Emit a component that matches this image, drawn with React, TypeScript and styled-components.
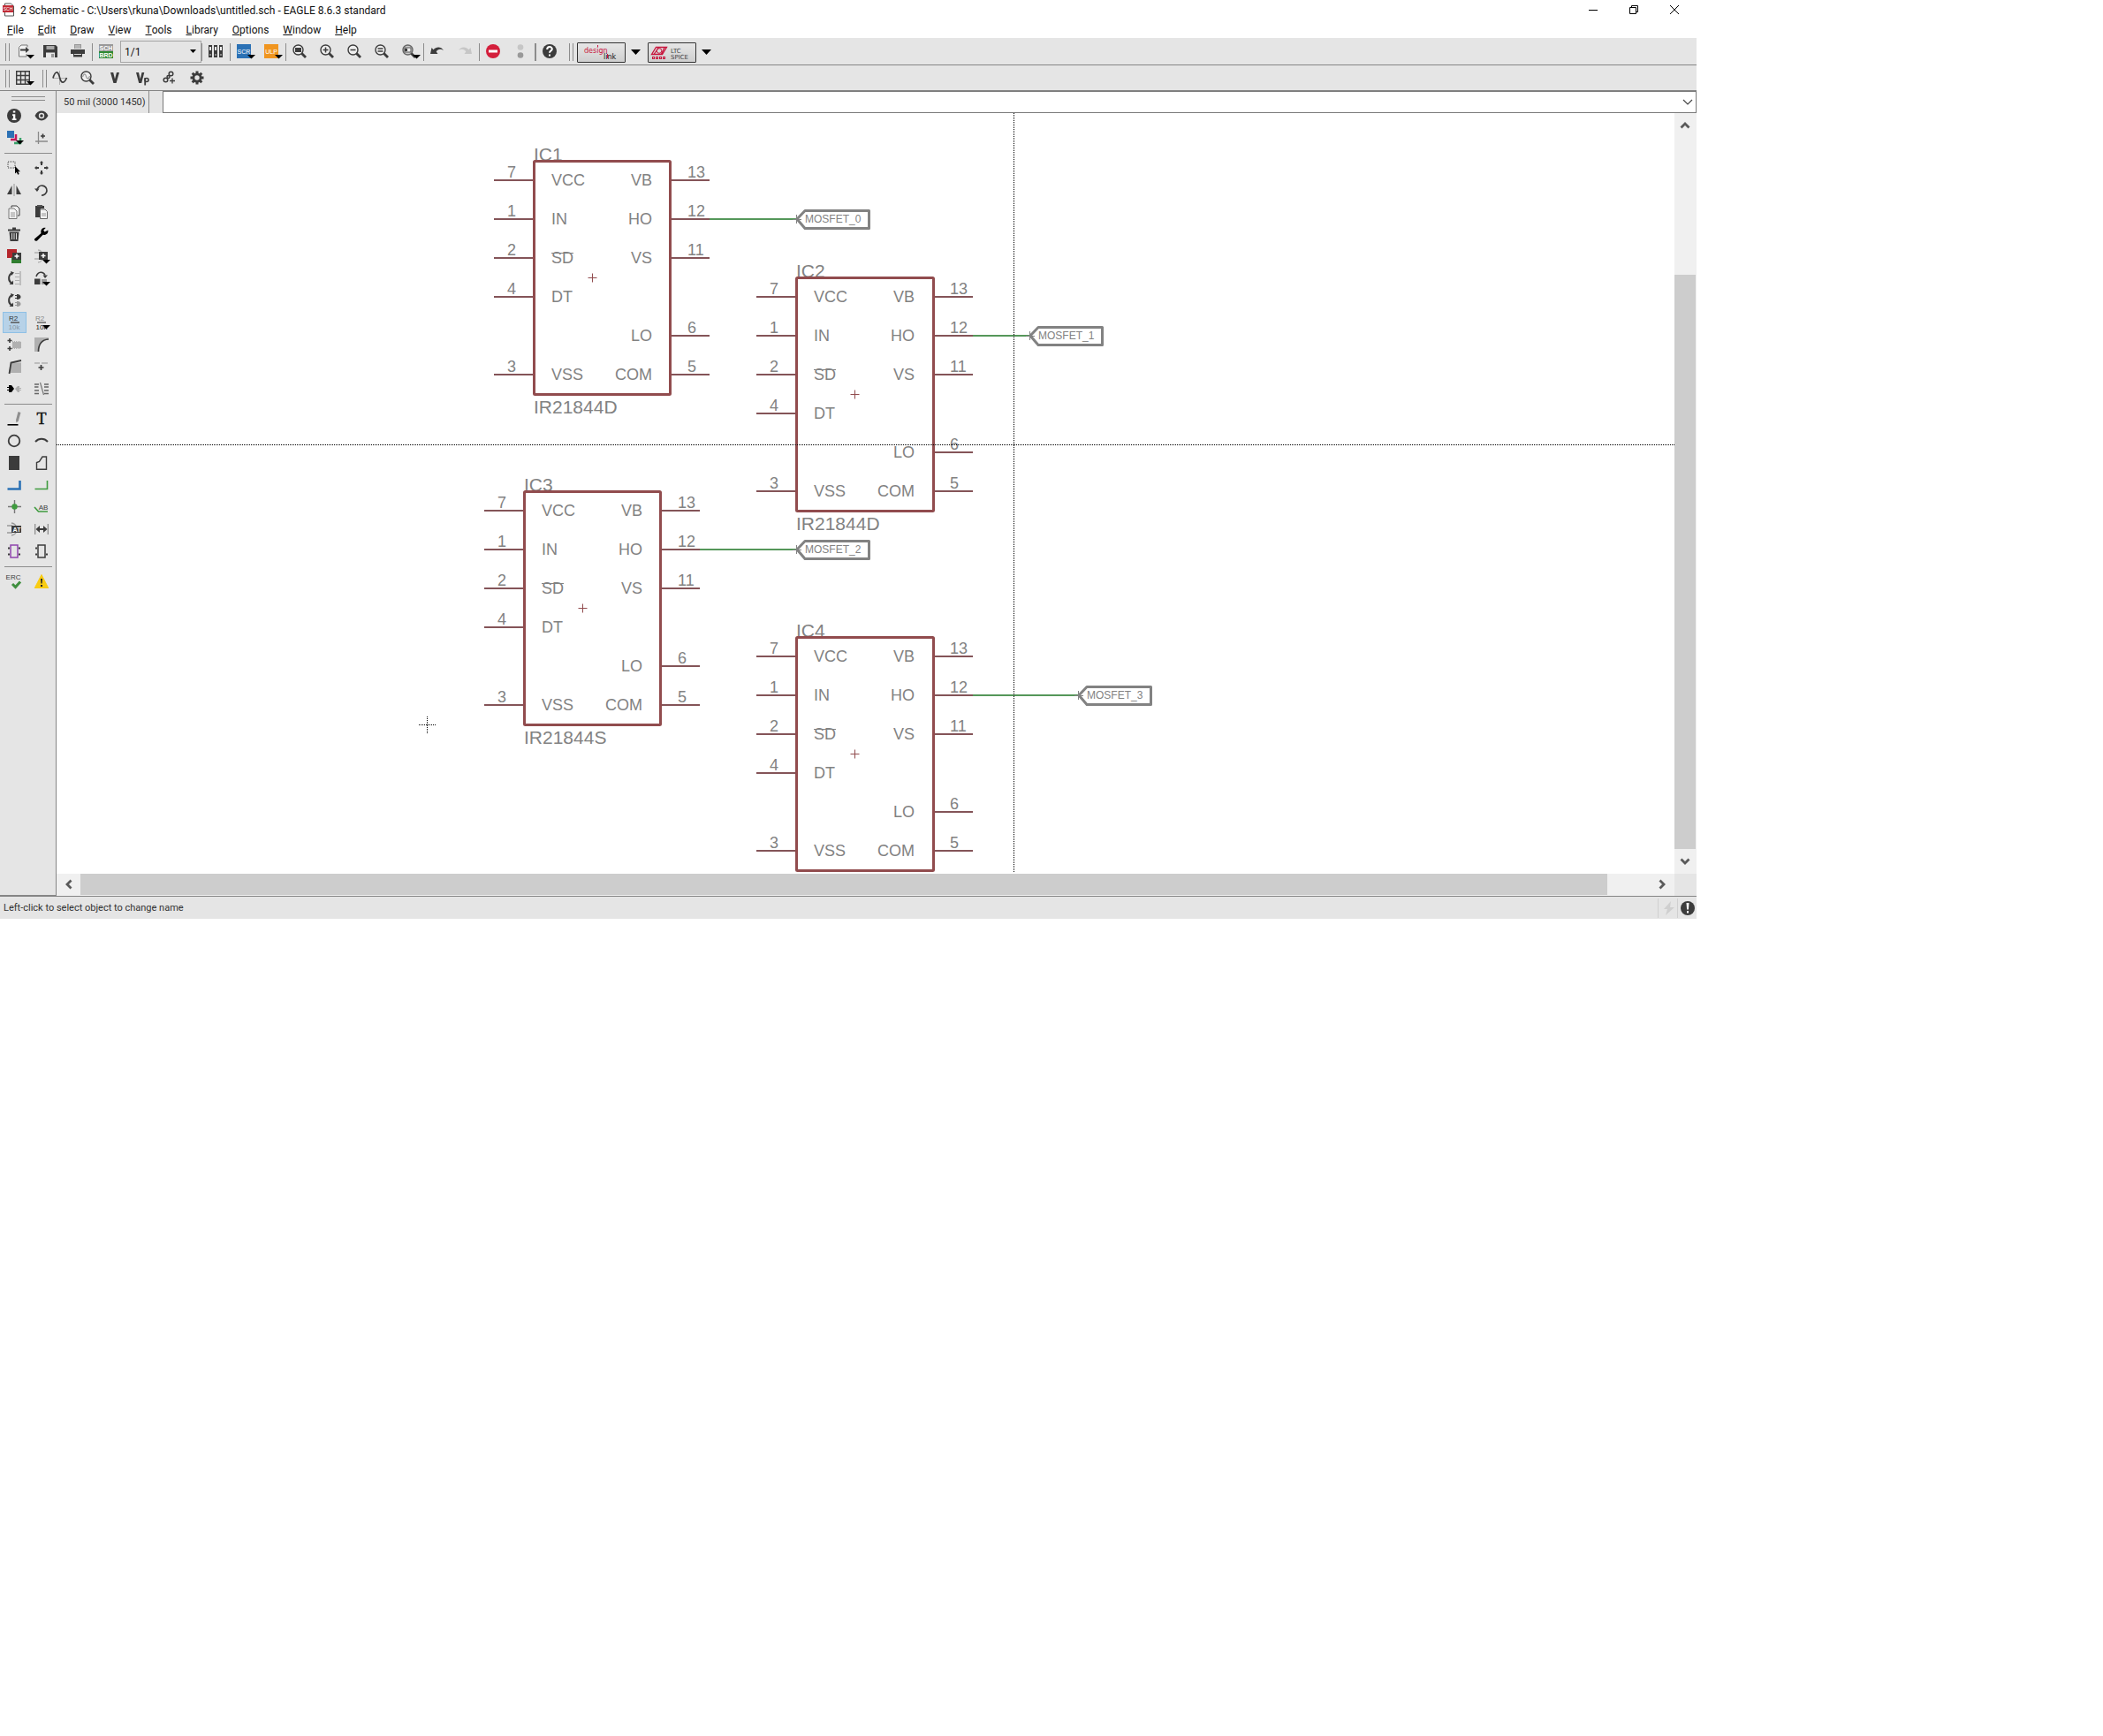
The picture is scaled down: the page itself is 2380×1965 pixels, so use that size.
import React from "react";
import styled, { createGlobalStyle, css } from "styled-components";

const ui = `Roboto, "Open Sans", sans-serif`;
const dark = "#3c3c3c";
const mid = "#8a8a8a";
const light = "#b0b0b0";
const green = "#3f9b3f";

const Global = createGlobalStyle`
  * { box-sizing: border-box; }
  body { margin: 0; background: #fff; }
  button, input, select { font: inherit; color: inherit; }
`;

const AppWindow = styled.main`
  max-width: 1920px;
  display: flex;
  flex-direction: column;
  background: #fff;
  color: #111;
  font-family: ${ui};
  font-size: 12px;
`;

const TitleBar = styled.header`
  display: flex;
  align-items: center;
  height: 22px;
  padding-left: 3px;
  gap: 7px;
`;

const Title = styled.h1`
  flex: 1;
  margin: 0;
  padding-top: 2px;
  font-size: 12px;
  line-height: 20px;
  font-weight: 400;
  white-space: nowrap;
`;

const WindowButtons = styled.div`
  display: flex;
  margin-right: 2px;
`;

const plainButton = css`
  border: 0;
  margin: 0;
  padding: 0;
  background: none;
  display: flex;
  align-items: center;
  justify-content: center;
  flex: none;
`;

const WindowButton = styled.button`
  ${plainButton}
  width: 46px;
  height: 20px;
`;

const MenuBar = styled.nav`
  display: flex;
  align-items: center;
  gap: 16px;
  height: 21px;
  padding: 3px 0 0 8px;
`;

const MenuButton = styled.button`
  ${plainButton}
  font-size: 12px;
  line-height: 20px;
`;

const Toolbar = styled.div<{ $main?: boolean }>`
  display: flex;
  align-items: flex-start;
  height: ${(p) => (p.$main ? 31 : 29)}px;
  padding: ${(p) => (p.$main ? 3 : 2)}px 0 0 6px;
  background: #e5e5e5;
  border-bottom: 1px solid #858585;
`;

const Handle = styled.span`
  flex: none;
  width: 5px;
  height: 20px;
  margin-top: 3px;
  border: solid #8c8c8c;
  border-width: 0 1px;
`;

const Gap = styled.span<{ $w: number }>`
  flex: none;
  width: ${(p) => p.$w}px;
`;

const Divider = styled.span<{ $wide?: boolean }>`
  flex: none;
  width: ${(p) => (p.$wide ? 2 : 1)}px;
  height: 20px;
  margin-top: 3px;
  background: #8c8c8c;
`;

const ToolButton = styled.button<{ $active?: boolean }>`
  ${plainButton}
  align-items: flex-start;
  justify-content: flex-start;
  width: 31px;
  height: 25px;
  padding: 4px 0 0 7px;
  svg { flex: none; overflow: visible; }
  ${(p) =>
    p.$active &&
    css`
      width: 27px;
      height: 24px;
      margin: 0 2px;
      padding: 3px 0 0 4px;
      background: #b7d2e8;
      border: 1px solid #8fc0e6;
    `}
`;

const SheetPicker = styled.label`
  position: relative;
  flex: none;
  width: 92px;
  height: 25px;
`;

const SheetSelect = styled.select`
  appearance: none;
  width: 100%;
  height: 100%;
  padding: 0 4px;
  border: 1px solid #a6a6a6;
  border-radius: 0;
  background: #e5e5e5;
  font-size: 12px;
`;

const PickerArrow = styled.svg`
  position: absolute;
  right: 6px;
  top: 10px;
  pointer-events: none;
`;

const LogoButton = styled.button`
  ${plainButton}
  width: 55px;
  height: 23px;
  margin-top: 2px;
  border: 1px solid #333;
  border-radius: 1px;
  background: linear-gradient(#e6e6e6, #cfcfcf);
`;

const ArrowButton = styled.button`
  ${plainButton}
  width: 25px;
  height: 25px;
  padding-right: 2px;
`;

const Body = styled.div`
  display: flex;
`;

const ToolPalette = styled.aside`
  flex: none;
  width: 64px;
  background: #e5e5e5;
  border: solid #858585;
  border-width: 0 1px 1px 0;
`;

const PaletteHandle = styled.div`
  height: 5px;
  margin: 6px 12px 5px 13px;
  border: solid #8c8c8c;
  border-width: 1px 0;
`;

const PaletteGroup = styled.div`
  display: grid;
  grid-template-columns: 31px 31px;
  grid-auto-rows: 25px;
  align-items: start;
  padding-left: 1px;
`;

const PaletteRule = styled.hr`
  height: 1px;
  margin: 4px 4px 4px 5px;
  border: 0;
  background: #8c8c8c;
`;

const Workspace = styled.div`
  flex: 1;
  min-width: 0;
`;

const CommandRow = styled.div`
  display: flex;
  height: 25px;
  background: #e5e5e5;
`;

const Coordinates = styled.output`
  width: 105px;
  padding-left: 8px;
  border-right: 1px solid #8c8c8c;
  font-size: 11px;
  line-height: 26px;
  color: #333;
  white-space: nowrap;
`;

const CommandBox = styled.div`
  flex: 1;
  display: flex;
  margin-left: 15px;
  border: 1px solid #7a7a7a;
  background: #fff;
`;

const CommandInput = styled.input`
  flex: 1;
  min-width: 0;
  border: 0;
  padding: 0 4px;
  outline: 0;
  background: none;
`;

const CommandArrow = styled.button`
  ${plainButton}
  width: 18px;
`;

const CanvasGrid = styled.div`
  display: grid;
  grid-template-columns: 1fr 25px;
  grid-template-rows: auto 25px;
  background: #e5e5e5;
`;

const Sheet = styled.svg`
  display: block;
  width: 100%;
  background: #fff;
  overflow: hidden;
  font-family: "Liberation Sans", Arial, sans-serif;
  font-size: 18px;
`;

const ScrollBar = styled.div<{ $vertical?: boolean }>`
  display: flex;
  flex-direction: ${(p) => (p.$vertical ? "column" : "row")};
  background: #f0f0f0;
  padding: 0 1px 1px 0;
`;

const ScrollButton = styled.button`
  ${plainButton}
  flex: 0 0 27px;
`;

const ScrollTrack = styled.div<{ $vertical?: boolean }>`
  flex: 1;
  display: flex;
  flex-direction: ${(p) => (p.$vertical ? "column" : "row")};
  justify-content: ${(p) => (p.$vertical ? "flex-end" : "flex-start")};
`;

const ScrollThumb = styled.div<{ $part: number }>`
  flex: 0 0 ${(p) => p.$part}%;
  background: #cdcdcd;
`;

const StatusBar = styled.footer`
  display: flex;
  align-items: center;
  height: 26px;
  padding-left: 4px;
  border-top: 1px solid #858585;
  background: #e5e5e5;
  color: #333;
  font-size: 11px;
`;

const StatusText = styled.span`
  flex: 1;
`;

const StatusCell = styled.span`
  display: flex;
  align-items: center;
  justify-content: flex-end;
  width: 22px;
  height: 22px;
  padding-right: 2px;
  border-left: 1px solid #d0d0d0;
`;

/* ---------- icons ---------- */

const Drop = ({ x = 12, y = 12 }: { x?: number; y?: number }) => (
  <path d={`M${x} ${y}h9l-4.500 4.500z`} fill="#000" />
);

const Lens = ({ children, grey }: { children?: React.ReactNode; grey?: boolean }) => (
  <>
    <circle cx="6.500" cy="6.500" r="5.500" fill={grey ? "#ccc" : "#efefef"} stroke={grey ? "#666" : dark} strokeWidth="1.400" />
    <path d="M10.500 10.500L15 15" stroke={dark} strokeWidth="2.800" />
    {children}
  </>
);

const Tiny = ({ x, y, fill, size = 7, bold, children }: { x: number; y: number; fill: string; size?: number; bold?: boolean; children: string }) => (
  <text x={x} y={y} fill={fill} fontSize={size} fontWeight={bold ? 700 : 400} fontFamily='"Liberation Sans", Arial, sans-serif' textAnchor="middle">
    {children}
  </text>
);

const icons: Record<string, React.ReactNode> = {
  open: (
    <>
      <path d="M13 3.500V1H6L3.500 3.500V14H12v-3" fill="#f2f2f2" stroke="#777" />
      <path d="M5 6.500h7" stroke={dark} strokeWidth="2" />
      <path d="M11 3l4 3.500-4 3.500z" fill={dark} />
      <Drop />
    </>
  ),
  save: (
    <>
      <path d="M0 1h14l2 2v12H0z" fill={dark} />
      <path d="M3.500 2h9v4h-9z" fill="#a8a8a8" />
      <path d="M3 9.500h10V15H3z" fill="#e8e8e8" />
      <path d="M9 11h3v4H9z" fill="#999" />
    </>
  ),
  print: (
    <>
      <path d="M4 0h8v5H4z" fill="#999" />
      <path d="M5 2h6M5 4h6" stroke="#eee" strokeWidth=".7" />
      <path d="M0 6h16v5H0z" fill={dark} />
      <path d="M3 9h10v5H3z" fill={dark} />
      <path d="M4 11.500h8" stroke="#ddd" />
      <path d="M3 14h10v1H3z" fill="#999" />
    </>
  ),
  board: (
    <>
      <path d="M0 0h16v8H0z" fill="#999" />
      <path d="M0 8h16v8H0z" fill="#2f8a33" />
      <Tiny x={8} y={7} fill="#fff" size={7} bold>SCH</Tiny>
      <Tiny x={8} y={15} fill="#fff" size={7} bold>BRD</Tiny>
    </>
  ),
  sheets: (
    <>
      {[0, 6, 12].map((x) => (
        <g key={x}>
          <path d={`M${x} 1h4v14h-4z`} fill={dark} />
          <path d={`M${x + 1} 3h2v4h-2z`} fill="#eee" />
          <path d={`M${x + 1} 11h2v2h-2z`} fill="#888" />
        </g>
      ))}
    </>
  ),
  scr: (
    <>
      <path d="M0 0h16v16H0z" fill="#2b71b5" />
      <Tiny x={8} y={11} fill="#fff">SCR</Tiny>
      <Drop />
    </>
  ),
  ulp: (
    <>
      <path d="M0 0h16v16H0z" fill="#f0951f" />
      <Tiny x={8} y={11} fill="#fff">ULP</Tiny>
      <Drop />
    </>
  ),
  zoomFit: <Lens><path d="M3 4h7v5H3z" fill={dark} /></Lens>,
  zoomIn: <Lens><path d="M3.500 6.500h6M6.500 3.500v6" stroke={dark} strokeWidth="1.500" /></Lens>,
  zoomOut: <Lens><path d="M3.500 6.500h6" stroke={dark} strokeWidth="1.500" /></Lens>,
  zoomRedraw: <Lens><path d="M3.500 5h6M3.500 8h6" stroke={dark} strokeWidth="1.300" /></Lens>,
  zoomSelect: (
    <>
      <Lens grey><path d="M3 4h7v5H3z" fill="#eee" stroke="#555" /><path d="M3 5h3v3H3z" fill={dark} /></Lens>
      <Drop />
    </>
  ),
  undo: <path d="M0 11l1.500-7 2 2.200C7 2.500 12 2.500 15 7c-3.500-2-6.500-1.500-8.300 1.500L8.500 11z" fill={dark} />,
  redo: <path d="M16 11l-1.500-7-2 2.200C9 2.500 4 2.500 1 7c3.500-2 6.500-1.500 8.300 1.500L7.500 11z" fill="#c6c6c6" />,
  stop: (
    <>
      <circle cx="8" cy="8" r="8" fill="#d41f3c" />
      <path d="M3 6.500h10v3H3z" fill="#fff" />
    </>
  ),
  lights: (
    <>
      <circle cx="8" cy="3.500" r="3.300" fill="#c6c6c6" />
      <circle cx="8" cy="12.500" r="3.300" fill="#999" />
    </>
  ),
  help: (
    <>
      <circle cx="8" cy="8" r="8" fill={dark} />
      <path d="M5.200 6c0-4 5.800-3.600 5.600-.4C10.700 7.500 8 7.300 8 9.800" fill="none" stroke="#fff" strokeWidth="2" />
      <path d="M7 11.500h2v2H7z" fill="#fff" />
    </>
  ),
  grid: (
    <>
      <path d="M.7.700h14.600v14.600H.7zM5.500 0v16M10.500 0v16M0 5.500h16M0 10.500h16" fill="none" stroke={dark} strokeWidth="1.400" />
      <Drop />
    </>
  ),
  wave: (
    <>
      <path d="M0 8.500h16M7.500 0v16" stroke={light} />
      <path d="M0 8.500C2 1 5.500-1 7.500 7.500S13 14 15.500 8" fill="none" stroke={dark} strokeWidth="1.700" />
    </>
  ),
  waveLens: <Lens><path d="M2.500 7C4 3 5.500 3 6.500 6.500S9.500 9.500 10.500 6" fill="none" stroke="#999" strokeWidth="1.200" /></Lens>,
  voltage: <path d="M3 2h3.200L8 9.500 10 2h3L9.600 14H6.400z" fill={dark} />,
  phase: (
    <>
      <path d="M1 2h3l1.700 7.500L7.500 2h2.800L7.200 14h-3z" fill={dark} />
      <path d="M11.200 16.500V8" stroke={dark} strokeWidth="1.800" />
      <circle cx="13" cy="10.500" r="2" fill="none" stroke={dark} strokeWidth="1.600" />
    </>
  ),
  link: (
    <>
      <g fill="none" stroke={dark} strokeWidth="1.500">
        <circle cx="3.500" cy="10.500" r="2.300" />
        <circle cx="9.500" cy="3.500" r="2.300" />
        <circle cx="6.500" cy="7" r="1.500" />
      </g>
      <path d="M8 11.500h6M11 8.500v6" stroke={dark} strokeWidth="1.300" />
    </>
  ),
  gear: (
    <>
      <g stroke={dark} strokeWidth="3">
        <path d="M8 .5v15M.5 8h15M2.700 2.700l10.600 10.600M13.300 2.700L2.700 13.300" />
      </g>
      <circle cx="8" cy="8" r="5.500" fill={dark} />
      <circle cx="8" cy="8" r="2.700" fill="#e5e5e5" />
    </>
  ),
  info: (
    <>
      <circle cx="8" cy="8" r="8" fill={dark} />
      <path d="M6.800 2.500h2.500v2H6.800zM6 6.200h3.300v5H10.500v1.800H5.700v-1.800h1.200V8H6z" fill="#fff" />
    </>
  ),
  eye: (
    <>
      <path d="M.5 8C4 .8 12 .8 15.500 8 12 15.200 4 15.200.5 8z" fill={dark} />
      <circle cx="8" cy="8" r="3.200" fill="#e5e5e5" />
      <circle cx="8" cy="8" r="1.800" fill={dark} />
    </>
  ),
  layers: (
    <>
      <path d="M0 0h8v8H0z" fill="#2b71b5" />
      <path d="M10 4v6H4" fill="none" stroke="#c2185b" strokeWidth="2.500" />
      <path d="M15 8v6H8" fill="none" stroke="#38a169" strokeWidth="2.500" />
      <Drop x={10} y={11} />
    </>
  ),
  mark: (
    <>
      <path d="M4.500 1v14M1 12h14" stroke={mid} strokeWidth="1.300" fill="none" />
      <path d="M7 6h5M9.500 3.500v5" stroke={dark} strokeWidth="1.700" />
    </>
  ),
  group: (
    <>
      <path d="M1 1h8v7H1z" fill="none" stroke={dark} strokeDasharray="1 1" />
      <path d="M9 6v8.500l1.800-1.700 1.400 3 1.500-.7-1.300-2.800H15z" fill="#000" />
    </>
  ),
  move: (
    <path d="M8 0l2.200 2.500H9v2.500H7V2.500H5.800zM8 16l2.200-2.500H9V11H7v2.500H5.800zM0 8l2.500-2.200V7H5v2H2.500v1.200zM16 8l-2.500-2.200V7H11v2h2.500v1.200z" fill={dark} />
  ),
  mirror: (
    <>
      <path d="M5.500 3v10H0z" fill={dark} />
      <path d="M10.500 3v10H16z" fill={dark} />
      <path d="M8 1v14" stroke={light} strokeWidth="1.500" />
    </>
  ),
  rotate: (
    <>
      <path d="M3 8.500a5.500 5.500 0 1 1 5 5.500" fill="none" stroke={dark} strokeWidth="1.700" />
      <path d="M0 6.500h5.500L3 10z" fill={dark} />
    </>
  ),
  copy: (
    <>
      <path d="M5 3V1h6l3 3v8h-2" fill="#eee" stroke={dark} />
      <path d="M2 4h6l3 3v8.500H2z" fill="#f4f4f4" stroke="#777" />
      <path d="M4 9h5M4 11h5M4 13h5" stroke="#999" />
    </>
  ),
  paste: (
    <>
      <path d="M1 1h10v3h-4v10H1z" fill={dark} />
      <path d="M3 0h6v2H3z" fill="#555" />
      <path d="M6.500 5H12l2.500 2.500v8h-8z" fill="#f4f4f4" stroke="#666" />
      <path d="M8 10h5M8 12h5" stroke="#999" />
    </>
  ),
  trash: (
    <>
      <path d="M1 2.500h5V.5h4v2h5V4.500H1zM2.500 5.500h11L12.500 16h-9z" fill={dark} />
      <path d="M5.500 7v7M8 7v7M10.500 7v7" stroke="#ddd" />
    </>
  ),
  wrench: <path d="M0 13.500L7.500 7C6.500 3 9 .3 12.700.9L10.200 3.400l1.400 2 3.700-2C16 7 13 9.600 9.600 8.800L3 15.500C1 16.500-.5 15 0 13.500z" fill="#000" />,
  add: (
    <>
      <path d="M0 0h11v10H0z" fill="#b5262c" />
      <path d="M5 9h11v7H5z" fill="#2f7d2f" />
      <path d="M6 4h10v8H6z" fill={dark} />
      <path d="M8.500 8h5M11 5.500v5" stroke="#fff" strokeWidth="1.500" />
    </>
  ),
  addPart: (
    <>
      <path d="M4 1c7 0 7 14 0 14M0 4h6M0 11h6" stroke={light} fill="none" strokeWidth="1.300" />
      <path d="M5 3h10v9H5z" fill={dark} />
      <path d="M7.500 7.500h5M10 5v5" stroke="#fff" strokeWidth="1.500" />
      <Drop x={9} y={12} />
    </>
  ),
  pinSwap: (
    <>
      <path d="M6 2C1 4 1 11 5 13.500" fill="none" stroke={dark} strokeWidth="2" />
      <path d="M4 0l4 1.500L5 5zM2.500 15h4.500v-4.500z" fill={dark} />
      <path d="M9 2.500h5M9 6.500h5M9 10.500h5M9 14.500h5" stroke={light} strokeWidth="1.200" />
      <path d="M15 0v16" stroke={light} strokeWidth="1.500" />
    </>
  ),
  replace: (
    <>
      <path d="M2 6C4 0 10 0 12 4.500" fill="none" stroke={dark} strokeWidth="1.600" />
      <path d="M9.500 4.500h5.500L12 8z" fill={dark} />
      <path d="M0 8.500h6.500V15H0z" fill={dark} />
      <path d="M8 9h6v6H8z" fill="#999" />
      <Drop x={9} y={12} />
    </>
  ),
  gateSwap: (
    <>
      <path d="M6 2C1 4 1 11 5 13.500" fill="none" stroke={dark} strokeWidth="2" />
      <path d="M4 0l4 1.500L5 5zM2.500 15h4.500v-4.500z" fill={dark} />
      <path d="M11 1c6-.5 6 6.500 0 6z" fill={dark} />
      <path d="M11 9c6-.5 6 6.500 0 6z" fill="#999" />
      <path d="M9 2.500h3M9 5.500h3" stroke={dark} />
      <path d="M9 10.500h3M9 13.500h3" stroke="#999" />
    </>
  ),
  name: (
    <>
      <Tiny x={7} y={6} fill="#333" size={8}>R2</Tiny>
      <path d="M4 8h10" stroke="#555" strokeWidth="1.500" />
      <Tiny x={8} y={16} fill="#8796a3" size={8}>10k</Tiny>
    </>
  ),
  value: (
    <>
      <Tiny x={6} y={6} fill="#888" size={8}>R2</Tiny>
      <path d="M3 8h10" stroke="#666" strokeWidth="1.500" />
      <Tiny x={8} y={16} fill="#222" size={8}>10k</Tiny>
      <Drop x={9} y={11} />
    </>
  ),
  smash: (
    <>
      <path d="M3 1v5M.5 3.500h5M3 10v5M.5 12.500h5" stroke={dark} strokeWidth="1.600" />
      <path d="M6 5h10v7H6z" fill={light} />
      <path d="M6 4.500h10M6 12.500h10" stroke={light} strokeDasharray="1 1" />
    </>
  ),
  miter: (
    <>
      <path d="M0 0h16v2C8 3 4 7 4 16H0z" fill={light} />
      <path d="M4.500 16C4.500 7 9 2.500 16 2" fill="none" stroke={dark} strokeWidth="1.700" />
    </>
  ),
  split: (
    <>
      <path d="M5 3.500h11V15H3z" fill={light} />
      <path d="M2.500 16L4.500 3.500 16 1" fill="none" stroke={dark} strokeWidth="1.800" />
    </>
  ),
  optimise: (
    <>
      <path d="M0 4h6M8 4h7" stroke={light} strokeWidth="1.500" />
      <path d="M4.500 9h6M7.500 6v6" stroke={dark} strokeWidth="1.700" />
    </>
  ),
  gates: (
    <>
      <path d="M0 6h2V4h3l3 4-3 4H2v-2H0V9h2V7H0z" fill="#000" />
      <path d="M16 7h-2V5h-2L9 8l3 4h2v-2h2V9h-2V8h2z" fill={light} />
    </>
  ),
  arrays: (
    <>
      <path d="M0 3h5M0 6h4.500M0 10h5M0 13.500h5M11 3h5M11 6h5M11 10h5M11 13.500h5" stroke="#666" strokeWidth="1.500" />
      <path d="M6.500 1l4 14" stroke="#777" strokeWidth="1.200" />
    </>
  ),
  line: (
    <>
      <path d="M.5 14.800h12" stroke="#000" strokeWidth="1.600" />
      <path d="M12.500 0l3 1-2.700 9.500-2.300 2-.5-3z" fill="#8f8f8f" />
    </>
  ),
  text: (
    <text x="8" y="14" fontFamily='"Liberation Serif", serif' fontSize="18" textAnchor="middle" fill="#111" stroke="#111" strokeWidth=".4">T</text>
  ),
  circle: <circle cx="8" cy="8" r="6.300" fill="none" stroke={dark} strokeWidth="1.800" />,
  arc: <path d="M1 9c4-4.200 10-4.200 14 0" fill="none" stroke={dark} strokeWidth="2" />,
  rect: <path d="M2 0h12v16H2z" fill={dark} />,
  polygon: <path d="M2.500 15.300V7.500L5.500 6.500 9 1h4.500v14.300z" fill="none" stroke={dark} strokeWidth="1.400" />,
  bus: <path d="M.5 12.500h14V3" fill="none" stroke="#2b71b5" strokeWidth="2.600" />,
  net: <path d="M.5 12.500h14V3" fill="none" stroke={green} strokeWidth="1.600" />,
  junction: (
    <>
      <path d="M8.500 0v15M1 7.500h15" stroke="#777" strokeWidth="1.400" />
      <circle cx="8.500" cy="7.500" r="3.200" fill={green} />
    </>
  ),
  label: (
    <>
      <path d="M0 8l4.500 5H15" fill="none" stroke={green} strokeWidth="1.700" />
      <Tiny x={10} y={11} fill={dark} size={8}>AB</Tiny>
    </>
  ),
  attribute: (
    <>
      <path d="M5 1c8 1 8 13 0 14M0 4h6M0 12h6" stroke="#999" fill="none" strokeWidth="1.300" />
      <path d="M5 4h11v8H5z" fill={dark} />
      <Tiny x={11} y={11} fill="#fff" size={7} bold>AT</Tiny>
    </>
  ),
  dimension: (
    <>
      <path d="M.7 2v12M15.300 2v12" stroke="#888" strokeWidth="1.200" />
      <path d="M1.500 8L6 4v3h4V4l4.500 4L10 12V9H6v3z" fill={dark} />
    </>
  ),
  module: (
    <>
      <path d="M4 1h8v14H4z" fill="none" stroke="#8e44ad" strokeWidth="1.500" />
      <path d="M1 4.500h2M1 11.500h2M13 4.500h2M13 11.500h2" stroke={dark} strokeWidth="2" />
    </>
  ),
  port: (
    <>
      <path d="M4 1h8v14H4z" fill="none" stroke={dark} strokeWidth="1.500" />
      <path d="M1 4.500h2M1 11.500h2M13 11.500h2" stroke={dark} strokeWidth="2" />
    </>
  ),
  erc: (
    <>
      <Tiny x={7} y={6} fill={dark} size={8}>ERC</Tiny>
      <path d="M6 11l3.500 3.500L15 8.500" fill="none" stroke="#3f8f3f" strokeWidth="3" />
    </>
  ),
  warning: (
    <>
      <path d="M8 .5L15.700 15.500H.3z" fill="#f9cc12" stroke="#f9cc12" strokeLinejoin="round" />
      <path d="M7 5h2l-.4 5.500H7.400zM7 12h2v2H7z" fill="#222" />
    </>
  ),
};

const Tool = ({ icon, label, active }: { icon: string; label: string; active?: boolean }) => (
  <ToolButton type="button" aria-label={label} $active={active}>
    <svg width="16" height="16" viewBox="0 0 16 16">{icons[icon]}</svg>
  </ToolButton>
);

const Tools = ({ items }: { items: [string, string][] }) => (
  <>
    {items.map(([icon, label]) => (
      <Tool key={icon} icon={icon} label={label} active={icon === "name"} />
    ))}
  </>
);

const BigArrow = ({ label }: { label: string }) => (
  <ArrowButton type="button" aria-label={label}>
    <svg width="11" height="6"><path d="M0 0h11L5.500 6z" /></svg>
  </ArrowButton>
);

/* ---------- schematic ---------- */

const wireRed = "#914c4e";
const pinRed = "#845458";
const ink = "#828282";

const leftPins: [string, string, number][] = [
  ["7", "VCC", 22], ["1", "IN", 66], ["2", "SD", 110], ["4", "DT", 154], ["3", "VSS", 242],
];
const rightPins: [string, string, number][] = [
  ["13", "VB", 22], ["12", "HO", 66], ["11", "VS", 110], ["6", "LO", 198], ["5", "COM", 242],
];

const Chip = ({ x, y, w, name, part }: { x: number; y: number; w: number; name: string; part?: string }) => (
  <g transform={`translate(${x} ${y})`} fill={ink}>
    <text x="0" y="0" fontSize="21">{name}</text>
    <rect x=".5" y=".5" width={w} height="264" rx="1" fill="none" stroke={wireRed} strokeWidth="3" />
    {part && <text x="0" y="286" fontSize="21">{part}</text>}
    {leftPins.map(([num, pin, py]) => (
      <g key={num}>
        <path d={`M-45 ${py}H-1`} stroke={pinRed} strokeWidth="2" />
        <text x="-20" y={py - 3} textAnchor="end">{num}</text>
        <text x="20" y={py + 6}>{pin}</text>
      </g>
    ))}
    <path d="M20 104.500H45" stroke={ink} />
    {rightPins.map(([num, pin, py]) => (
      <g key={num}>
        <path d={`M${w + 2} ${py}H${w + 45}`} stroke={pinRed} strokeWidth="2" />
        <text x="174" y={py - 3}>{num}</text>
        <text x="134" y={py + 6} textAnchor="end">{pin}</text>
      </g>
    ))}
    <path d="M61.500 132.500H71.500M66.500 127.500V137.500" stroke={wireRed} />
  </g>
);

const NetTag = ({ x, y, from, children }: { x: number; y: number; from: number; children: string }) => (
  <g>
    <path d={`M${from} ${y}H${x}`} stroke="#55975a" strokeWidth="2" />
    <g transform={`translate(${x} ${y})`}>
      <path d="M0 0L9 -9.500H81.500V10.500H9Z" fill="none" stroke={ink} strokeWidth="3" strokeLinejoin="round" />
      <path d="M-5 .5H5M-.5 -5V5" stroke={ink} />
      <text x="9" y="4" fontSize="12" fill={ink}>{children}</text>
    </g>
  </g>
);

const Schematic = () => (
  <Sheet height="861" role="img" aria-label="Schematic sheet">
    <Chip x={540} y={54} w={154} name="IC1" part="IR21844D" />
    <Chip x={837} y={186} w={155} name="IC2" part="IR21844D" />
    <Chip x={529} y={428} w={154} name="IC3" part="IR21844S" />
    <Chip x={837} y={593} w={155} name="IC4" />
    <NetTag x={838} y={120} from={739}>MOSFET_0</NetTag>
    <NetTag x={1102} y={252} from={1037}>MOSFET_1</NetTag>
    <NetTag x={838} y={494} from={728}>MOSFET_2</NetTag>
    <NetTag x={1157} y={659} from={1037}>MOSFET_3</NetTag>
    <g stroke="#000" strokeDasharray="1 1">
      <line x1="0" y1="375.500" x2="100%" y2="375.500" />
      <line x1="1083.500" y1="0" x2="1083.500" y2="860" />
      <path d="M410 692.500H429M419.500 683V702" />
    </g>
  </Sheet>
);

const Chevron = ({ turn }: { turn: number }) => (
  <svg width="12" height="12" viewBox="0 0 12 12">
    <path d="M1.500 8.500L6 4l4.500 4.500" fill="none" stroke="#5a5a5a" strokeWidth="2.800" transform={`rotate(${turn} 6 6)`} />
  </svg>
);

const menus = ["File", "Edit", "Draw", "View", "Tools", "Library", "Options", "Window", "Help"];

export default function App() {
  return (
    <AppWindow>
      <Global />
      <TitleBar>
        <svg width="13" height="16" viewBox="0 0 13 16">
          <path d="M2.500 1h7l3 3v11h-10z" fill="#fff" stroke="#555" />
          <path d="M0 3h12v8H0z" fill="#c22b36" />
          <Tiny x={6} y={9} fill="#fff" size={5}>SCH</Tiny>
        </svg>
        <Title>2 Schematic - C:\Users\rkuna\Downloads\untitled.sch - EAGLE 8.6.3 standard</Title>
        <WindowButtons>
          <WindowButton type="button" aria-label="Minimize">
            <svg width="10" height="10"><path d="M0 5.500h10" stroke="#000" /></svg>
          </WindowButton>
          <WindowButton type="button" aria-label="Restore">
            <svg width="10" height="10"><path d="M.5 2.500h7v7h-7zM2.500 2.500v-2h7v7h-2" fill="none" stroke="#000" /></svg>
          </WindowButton>
          <WindowButton type="button" aria-label="Close">
            <svg width="10" height="10"><path d="M0 0l10 10M10 0L0 10" stroke="#000" /></svg>
          </WindowButton>
        </WindowButtons>
      </TitleBar>
      <MenuBar>
        {menus.map((m) => (
          <MenuButton key={m} type="button"><u>{m[0]}</u>{m.slice(1)}</MenuButton>
        ))}
      </MenuBar>
      <Toolbar $main>
        <Handle />
        <Tools items={[["open", "Open"], ["save", "Save"], ["print", "Print"]]} />
        <Divider />
        <Tool icon="board" label="Switch to board" />
        <SheetPicker>
          <SheetSelect aria-label="Sheet" defaultValue="1/1"><option>1/1</option></SheetSelect>
          <PickerArrow width="7" height="4"><path d="M0 0h7L3.500 4z" /></PickerArrow>
        </SheetPicker>
        <Divider />
        <Tool icon="sheets" label="Library manager" />
        <Divider />
        <Tools items={[["scr", "Run script"], ["ulp", "Run ULP"]]} />
        <Divider />
        <Tools items={[["zoomFit", "Zoom to fit"], ["zoomIn", "Zoom in"], ["zoomOut", "Zoom out"], ["zoomRedraw", "Redraw"], ["zoomSelect", "Zoom select"]]} />
        <Divider />
        <Tools items={[["undo", "Undo"], ["redo", "Redo"]]} />
        <Divider />
        <Tools items={[["stop", "Stop"], ["lights", "Go"]]} />
        <Divider $wide />
        <Tool icon="help" label="Help" />
        <Gap $w={6} />
        <Handle />
        <Gap $w={4} />
        <LogoButton type="button" aria-label="design link">
          <svg width="53" height="21" fontFamily='"DejaVu Sans", sans-serif' fontSize="8">
            <text x="7" y="11" fill="#c8143c">design</text>
            <text x="29" y="18" fill="#111">link</text>
            <path d="M22.500 2v2M33.500 12v5" stroke="#c8143c" />
          </svg>
        </LogoButton>
        <BigArrow label="design link options" />
        <LogoButton type="button" aria-label="LTC SPICE">
          <svg width="53" height="21" fontFamily='"DejaVu Sans", sans-serif' fontSize="7">
            <path d="M3.500 12.500L8.500 4.500H20.500L15.500 12.500zM6 12.500L12 4M14 13L18 5" fill="none" stroke="#c8143c" strokeWidth="1.300" />
            <circle cx="12" cy="8.500" r="2.800" fill="none" stroke="#c8143c" />
            {[4, 8, 12, 16].map((x) => <rect key={x} x={x + 0.5} y="15.500" width="2" height="2" fill="none" stroke="#c8143c" />)}
            <text x="25" y="11" fill="#444">LTC</text>
            <text x="25" y="18" fill="#444">SPICE</text>
          </svg>
        </LogoButton>
        <BigArrow label="LTC SPICE options" />
      </Toolbar>
      <Toolbar>
        <Handle />
        <Tool icon="grid" label="Grid" />
        <Gap $w={6} />
        <Handle />
        <Tools items={[["wave", "Simulate"], ["waveLens", "Probe"], ["voltage", "Voltage source"], ["phase", "Voltage probe"], ["link", "Add model"], ["gear", "Settings"]]} />
      </Toolbar>
      <Body>
        <ToolPalette>
          <PaletteHandle />
          <PaletteGroup>
            <Tools items={[["info", "Info"], ["eye", "Show"], ["layers", "Layers"], ["mark", "Mark"]]} />
          </PaletteGroup>
          <PaletteRule />
          <PaletteGroup>
            <Tools
              items={[
                ["group", "Group"], ["move", "Move"], ["mirror", "Mirror"], ["rotate", "Rotate"],
                ["copy", "Copy"], ["paste", "Paste"], ["trash", "Delete"], ["wrench", "Change"],
                ["add", "Add"], ["addPart", "Add part"], ["pinSwap", "Pin swap"], ["replace", "Replace"],
                ["gateSwap", "Gate swap"],
              ]}
            />
            <span />
            <Tools
              items={[
                ["name", "Name"], ["value", "Value"], ["smash", "Smash"], ["miter", "Miter"],
                ["split", "Split"], ["optimise", "Optimize"], ["gates", "Invoke"], ["arrays", "Slice"],
              ]}
            />
          </PaletteGroup>
          <PaletteRule />
          <PaletteGroup>
            <Tools
              items={[
                ["line", "Line"], ["text", "Text"], ["circle", "Circle"], ["arc", "Arc"],
                ["rect", "Rectangle"], ["polygon", "Polygon"], ["bus", "Bus"], ["net", "Net"],
                ["junction", "Junction"], ["label", "Label"], ["attribute", "Attribute"], ["dimension", "Dimension"],
                ["module", "Module"], ["port", "Port"],
              ]}
            />
          </PaletteGroup>
          <PaletteRule />
          <PaletteGroup>
            <Tools items={[["erc", "ERC"], ["warning", "Errors"]]} />
          </PaletteGroup>
        </ToolPalette>
        <Workspace>
          <CommandRow>
            <Coordinates>50 mil (3000 1450)</Coordinates>
            <CommandBox>
              <CommandInput type="text" aria-label="Command" />
              <CommandArrow type="button" aria-label="Command history">
                <svg width="12" height="7"><path d="M1 1l5 5 5-5" fill="none" stroke="#444" strokeWidth="1.200" /></svg>
              </CommandArrow>
            </CommandBox>
          </CommandRow>
          <CanvasGrid>
            <Schematic />
            <ScrollBar $vertical>
              <ScrollButton type="button" aria-label="Scroll up"><Chevron turn={0} /></ScrollButton>
              <ScrollTrack $vertical><ScrollThumb $part={80.6} /></ScrollTrack>
              <ScrollButton type="button" aria-label="Scroll down"><Chevron turn={180} /></ScrollButton>
            </ScrollBar>
            <ScrollBar>
              <ScrollButton type="button" aria-label="Scroll left"><Chevron turn={270} /></ScrollButton>
              <ScrollTrack><ScrollThumb $part={97.3} /></ScrollTrack>
              <ScrollButton type="button" aria-label="Scroll right"><Chevron turn={90} /></ScrollButton>
            </ScrollBar>
          </CanvasGrid>
        </Workspace>
      </Body>
      <StatusBar>
        <StatusText>Left-click to select object to change name</StatusText>
        <StatusCell>
          <svg width="14" height="16"><path d="M9 0L1 9h4l-2 7 10-9H8z" fill="#cfcfcf" /></svg>
        </StatusCell>
        <StatusCell>
          <svg width="16" height="16">
            <circle cx="8" cy="8" r="8" fill={dark} />
            <path d="M6.500 2h3l-.6 7.500H7.100zM7 11h2v2.500H7z" fill="#fff" />
          </svg>
        </StatusCell>
      </StatusBar>
    </AppWindow>
  );
}
